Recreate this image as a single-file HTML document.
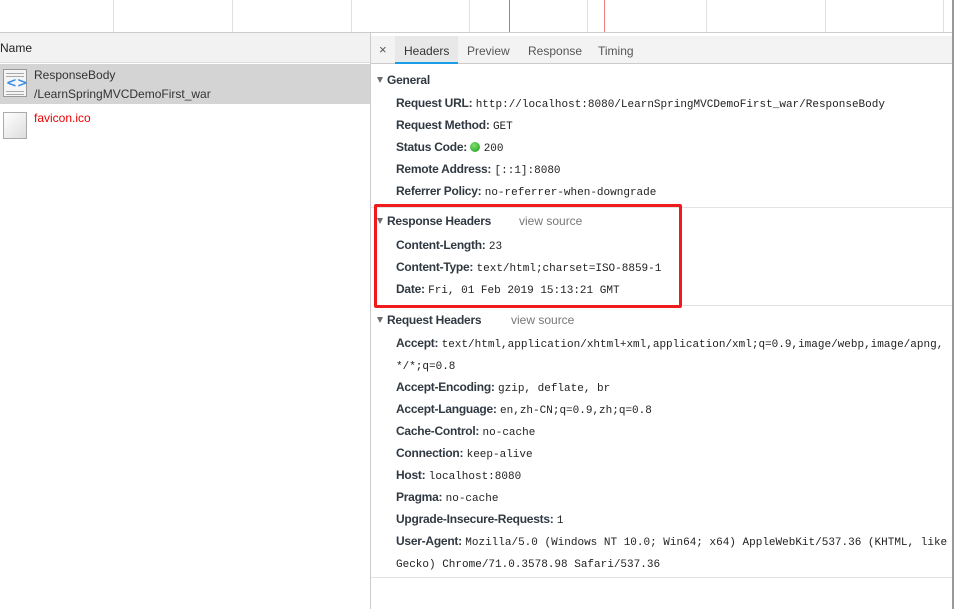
<!DOCTYPE html>
<html><head><meta charset="utf-8"><style>
*{margin:0;padding:0;box-sizing:border-box}
body{width:959px;height:609px;position:relative;overflow:hidden;background:#fff;font-family:"Liberation Sans",sans-serif;font-size:12px;color:#303942}
.a{position:absolute;white-space:nowrap}
.vl{position:absolute;top:0;height:32px;width:1px;background:#e0e0e0}
.k{font-weight:bold;color:#303942;font-size:12px;letter-spacing:-0.25px}
.m{font-family:"Liberation Mono",monospace;font-size:11px;color:#222}
.row{position:absolute;left:396px;white-space:nowrap;line-height:14px}
.hl{position:absolute;left:371px;width:581px;height:1px;background:#e3e3e3}
.t{position:absolute;font-weight:bold;font-size:12px;left:387px;letter-spacing:-0.25px}
.tri{position:absolute;left:377px;width:0;height:0;border-left:3.5px solid transparent;border-right:3.5px solid transparent;border-top:6px solid #6e6e6e}
.vs{position:absolute;color:#777;font-size:12px}
</style></head><body>
<div class="vl" style="left:113px"></div><div class="vl" style="left:232px"></div><div class="vl" style="left:351px"></div><div class="vl" style="left:469px"></div><div class="vl" style="left:587px"></div><div class="vl" style="left:706px"></div><div class="vl" style="left:825px"></div><div class="vl" style="left:943px"></div>
<div class="vl" style="left:509px;background:#8080e0"></div><div class="vl" style="left:604px;background:#f08080"></div>
<div class="a" style="left:0;top:32px;width:952px;height:1px;background:#ccc"></div>
<div class="a" style="left:952px;top:0;width:2px;height:609px;background:#9a9a9a"></div>
<!-- left -->
<div class="a" style="left:0;top:33px;width:370px;height:30px;background:#f2f2f2;border-bottom:1px solid #ddd"></div>
<div class="a" style="left:0;top:41px;color:#222">Name</div>
<div class="a" style="left:0;top:64px;width:370px;height:40px;background:#d4d4d4"></div>
<div class="a" style="left:3px;top:69px;width:24px;height:28px;background:#f5f5f5;border:1px solid #999"></div>
<div class="a" style="left:6px;top:73px;width:18px;height:1px;background:#aaa;box-shadow:0 3px #aaa,0 18px #aaa,0 21px #aaa"></div>
<div class="a" style="left:6px;top:76px;color:#3a8ee6;font-weight:bold;font-size:13px;font-family:'DejaVu Sans',sans-serif">&lt;&gt;</div>
<div class="a" style="left:34px;top:68px;color:#333">ResponseBody</div>
<div class="a" style="left:34px;top:87px;color:#333">/LearnSpringMVCDemoFirst_war</div>
<div class="a" style="left:3px;top:112px;width:24px;height:27px;background:linear-gradient(135deg,#fff,#ddd);border:1px solid #aaa"></div>
<div class="a" style="left:34px;top:111px;color:#e00">favicon.ico</div>
<div class="a" style="left:370px;top:33px;width:1px;height:576px;background:#ccc"></div>
<!-- tabs -->
<div class="a" style="left:371px;top:36px;width:581px;height:28px;background:#f3f3f3;border-bottom:1px solid #ccc"></div>
<div class="a" style="left:395px;top:36px;width:63px;height:28px;background:#e8e8e8;border-bottom:2px solid #1a9de8"></div>
<div class="a" style="left:379px;top:42px;color:#555;font-size:13px">×</div>
<div class="a" style="left:404px;top:44px;color:#333">Headers</div>
<div class="a" style="left:467px;top:44px;color:#555">Preview</div>
<div class="a" style="left:528px;top:44px;color:#555">Response</div>
<div class="a" style="left:598px;top:44px;color:#555">Timing</div>
<!-- general -->
<div class="tri" style="top:77px"></div><div class="t" style="top:73px">General</div>
<div class="row" style="top:96px"><span class="k">Request URL:</span> <span class="m">http://localhost:8080/LearnSpringMVCDemoFirst_war/ResponseBody</span></div>
<div class="row" style="top:118px"><span class="k">Request Method:</span> <span class="m">GET</span></div>
<div class="row" style="top:140px"><span class="k">Status Code:</span> <span style="display:inline-block;width:10px;height:10px;border-radius:50%;background:radial-gradient(circle at 40% 35%,#7ee06a,#1c9a1c);vertical-align:-1px"></span> <span class="m">200</span></div>
<div class="row" style="top:162px"><span class="k">Remote Address:</span> <span class="m">[::1]:8080</span></div>
<div class="row" style="top:184px"><span class="k">Referrer Policy:</span> <span class="m">no-referrer-when-downgrade</span></div>
<div class="hl" style="top:207px"></div>
<div class="tri" style="top:218px"></div><div class="t" style="top:214px">Response Headers</div><div class="vs" style="left:519px;top:214px">view source</div>
<div class="row" style="top:238px"><span class="k">Content-Length:</span> <span class="m">23</span></div>
<div class="row" style="top:260px"><span class="k">Content-Type:</span> <span class="m">text/html;charset=ISO-8859-1</span></div>
<div class="row" style="top:282px"><span class="k">Date:</span> <span class="m">Fri, 01 Feb 2019 15:13:21 GMT</span></div>
<div class="a" style="left:374px;top:204px;width:308px;height:104px;border:3px solid #f01c1c;border-radius:2px"></div>
<div class="hl" style="top:305px;left:683px;width:269px"></div>
<div class="tri" style="top:317px"></div><div class="t" style="top:313px">Request Headers</div><div class="vs" style="left:511px;top:313px">view source</div>
<div class="row" style="top:336px"><span class="k">Accept:</span> <span class="m">text/html,application/xhtml+xml,application/xml;q=0.9,image/webp,image/apng,</span></div>
<div class="row" style="top:358px"><span class="m">*/*;q=0.8</span></div>
<div class="row" style="top:380px"><span class="k">Accept-Encoding:</span> <span class="m">gzip, deflate, br</span></div>
<div class="row" style="top:402px"><span class="k">Accept-Language:</span> <span class="m">en,zh-CN;q=0.9,zh;q=0.8</span></div>
<div class="row" style="top:424px"><span class="k">Cache-Control:</span> <span class="m">no-cache</span></div>
<div class="row" style="top:446px"><span class="k">Connection:</span> <span class="m">keep-alive</span></div>
<div class="row" style="top:468px"><span class="k">Host:</span> <span class="m">localhost:8080</span></div>
<div class="row" style="top:490px"><span class="k">Pragma:</span> <span class="m">no-cache</span></div>
<div class="row" style="top:512px"><span class="k">Upgrade-Insecure-Requests:</span> <span class="m">1</span></div>
<div class="row" style="top:534px"><span class="k">User-Agent:</span> <span class="m">Mozilla/5.0 (Windows NT 10.0; Win64; x64) AppleWebKit/537.36 (KHTML, like</span></div>
<div class="row" style="top:556px"><span class="m">Gecko) Chrome/71.0.3578.98 Safari/537.36</span></div>
<div class="hl" style="top:577px"></div>
</body></html>
